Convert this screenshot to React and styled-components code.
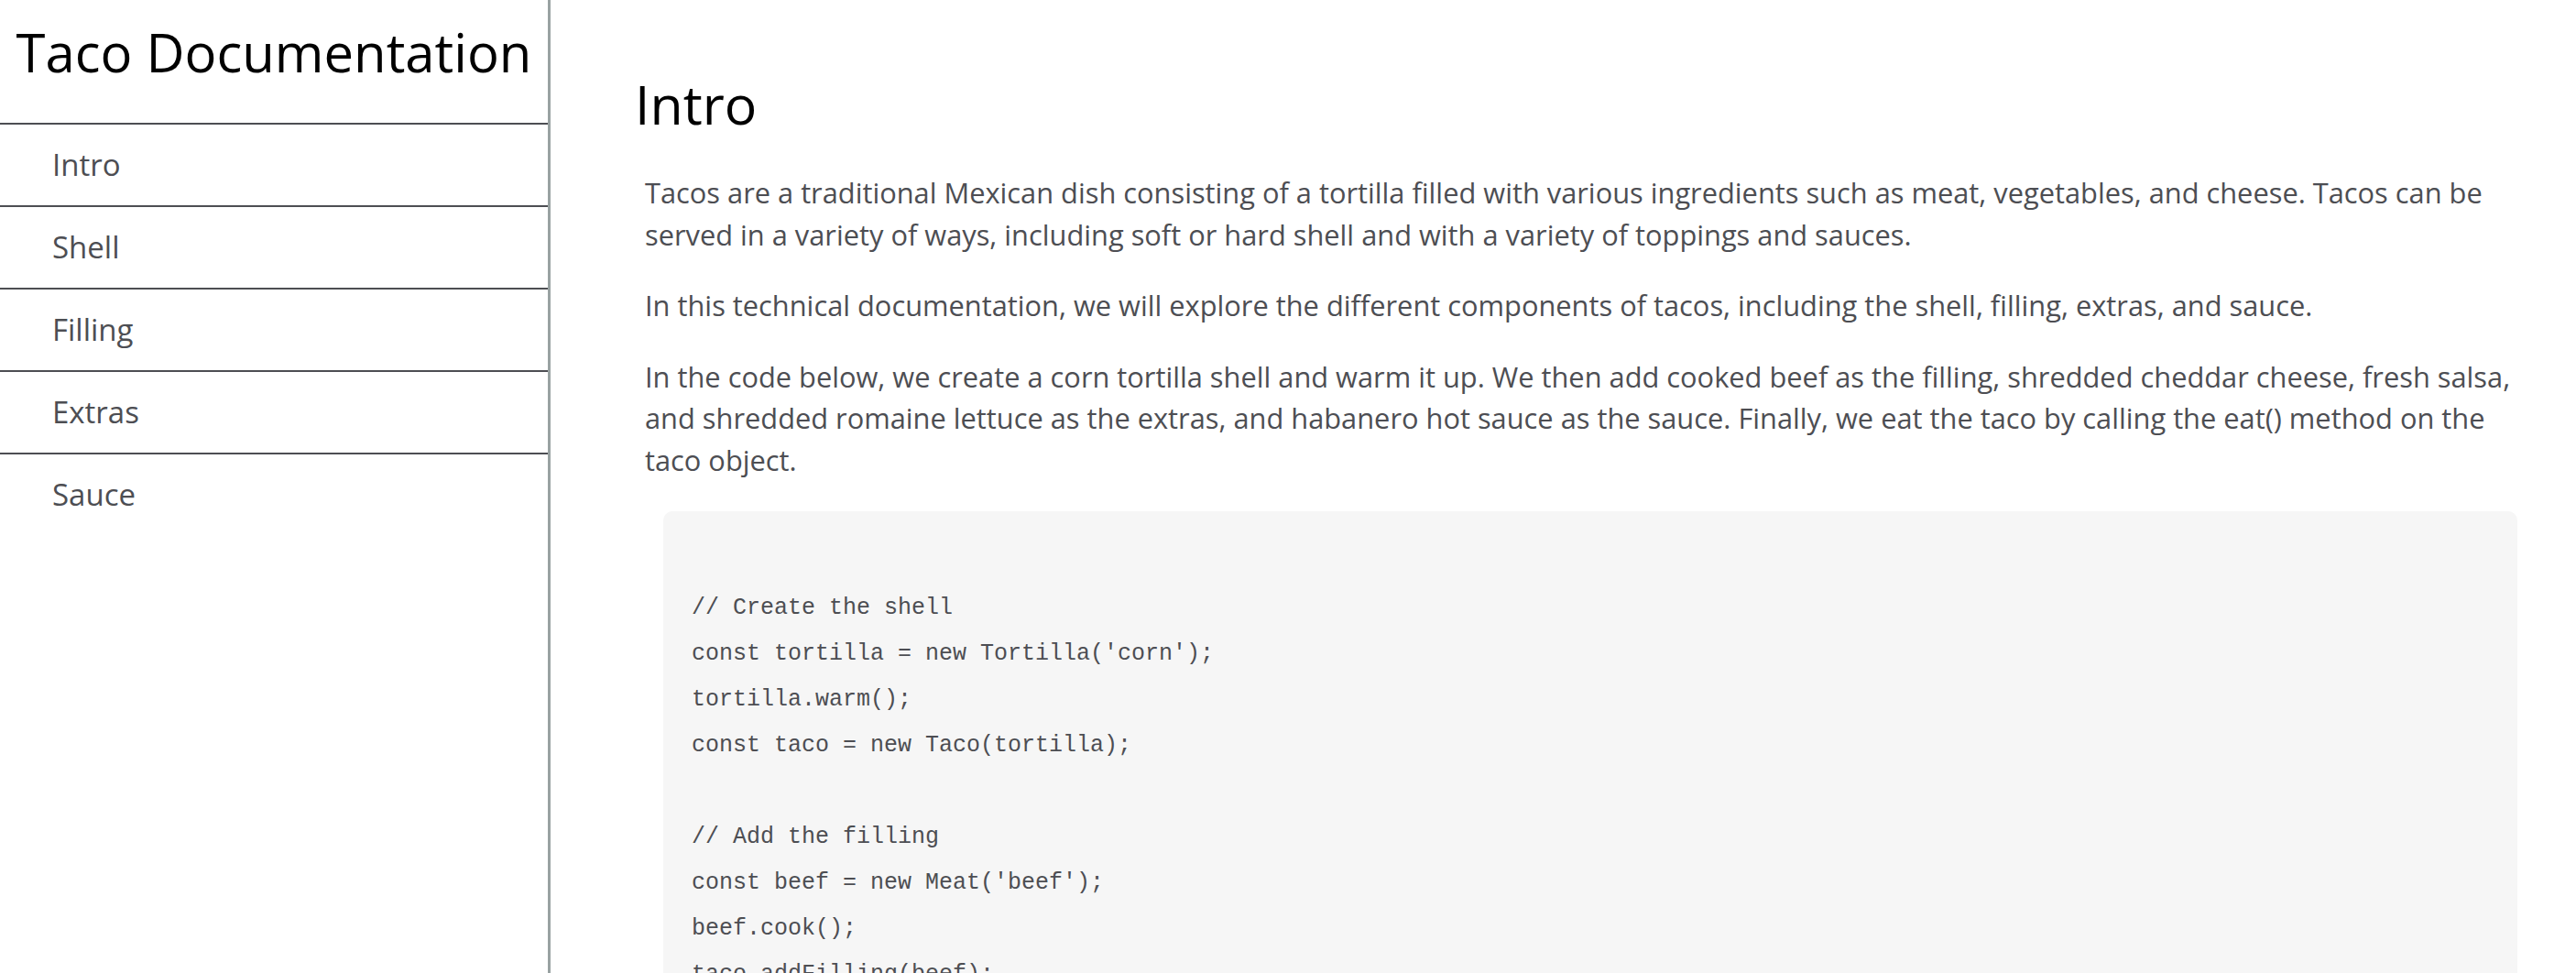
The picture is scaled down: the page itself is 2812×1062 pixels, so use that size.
import React from 'react';
import styled, { createGlobalStyle } from 'styled-components';

const GlobalStyle = createGlobalStyle`
  html, body {
    margin: 0;
    padding: 0;
    background: #ffffff;
  }
  body {
    font-family: "Open Sans", "Liberation Sans", Arial, sans-serif;
    color: #4d4e53;
  }
`;

const Page = styled.div`
  display: flex;
  height: 100vh;
  overflow: hidden;
`;

const Sidebar = styled.nav`
  flex: 0 0 598px;
  height: 100%;
  border-right: 3px solid rgba(0, 22, 22, 0.4);
  display: flex;
  flex-direction: column;
`;

const Title = styled.header`
  margin: 17px 0 0;
  font-size: 58px;
  line-height: 80px;
  font-weight: 400;
  color: #000000;
  text-align: center;
  white-space: nowrap;
`;

const NavList = styled.ul`
  margin: 37px 0 0;
  padding: 0;
  list-style: none;
`;

const NavItem = styled.li`
  border-top: 2px solid #4d4e53;
`;

const NavLink = styled.a`
  display: block;
  padding: 21px 30px 22px 57px;
  font-size: 33px;
  line-height: 45px;
  color: #4d4e53;
  text-decoration: none;
  cursor: pointer;
`;

const Main = styled.main`
  flex: 1 1 auto;
  min-width: 0;
  padding: 73px 44px 0 92px;
  overflow: hidden;
`;

const Section = styled.section`
  display: block;
`;

const SectionTitle = styled.h2`
  margin: 0;
  font-size: 59px;
  line-height: 80px;
  font-weight: 400;
  color: #000000;
`;

const Article = styled.article`
  margin: 35px 0 0 11px;
  color: #4d4e53;
`;

const Paragraph = styled.p`
  margin: 0 0 32px;
  font-size: 30.8px;
  line-height: 45.6px;
`;

const CodeBlock = styled.code`
  display: block;
  margin: 32px 20px 0;
  padding: 31px;
  border-radius: 10px;
  background: #f6f6f6;
  font-family: "Liberation Mono", "Courier New", monospace;
  font-size: 25px;
  line-height: 50px;
  color: #4d4e53;
  white-space: pre;
  text-align: left;
`;

const navItems = ['Intro', 'Shell', 'Filling', 'Extras', 'Sauce'];

const code = `
// Create the shell
const tortilla = new Tortilla('corn');
tortilla.warm();
const taco = new Taco(tortilla);

// Add the filling
const beef = new Meat('beef');
beef.cook();
taco.addFilling(beef);

// Add the extras
const cheese = new Cheese('cheddar');
cheese.shred();
const salsa = new Salsa('fresh');
const lettuce = new Lettuce('romaine');
lettuce.shred();
taco.addExtras([cheese, salsa, lettuce]);

// Add the sauce
const sauce = new HotSauce('habanero');
taco.addSauce(sauce);

// Eat the taco
taco.eat();`;

export default function App() {
  return (
    <>
      <GlobalStyle />
      <Page>
        <Sidebar id="navbar">
          <Title>Taco Documentation</Title>
          <NavList>
            {navItems.map((item) => (
              <NavItem key={item}>
                <NavLink href={`#${item}`}>{item}</NavLink>
              </NavItem>
            ))}
          </NavList>
        </Sidebar>
        <Main id="main-doc">
          <Section id="Intro">
            <SectionTitle>Intro</SectionTitle>
            <Article>
              <Paragraph>
                Tacos are a traditional Mexican dish consisting of a tortilla filled with various ingredients such as meat, vegetables, and cheese. Tacos can be served in a variety of ways, including soft or hard shell and with a variety of toppings and sauces.
              </Paragraph>
              <Paragraph>
                In this technical documentation, we will explore the different components of tacos, including the shell, filling, extras, and sauce.
              </Paragraph>
              <Paragraph>
                In the code below, we create a corn tortilla shell and warm it up. We then add cooked beef as the filling, shredded cheddar cheese, fresh salsa, and shredded romaine lettuce as the extras, and habanero hot sauce as the sauce. Finally, we eat the taco by calling the eat() method on the taco object.
              </Paragraph>
              <CodeBlock>{code}</CodeBlock>
            </Article>
          </Section>
        </Main>
      </Page>
    </>
  );
}
